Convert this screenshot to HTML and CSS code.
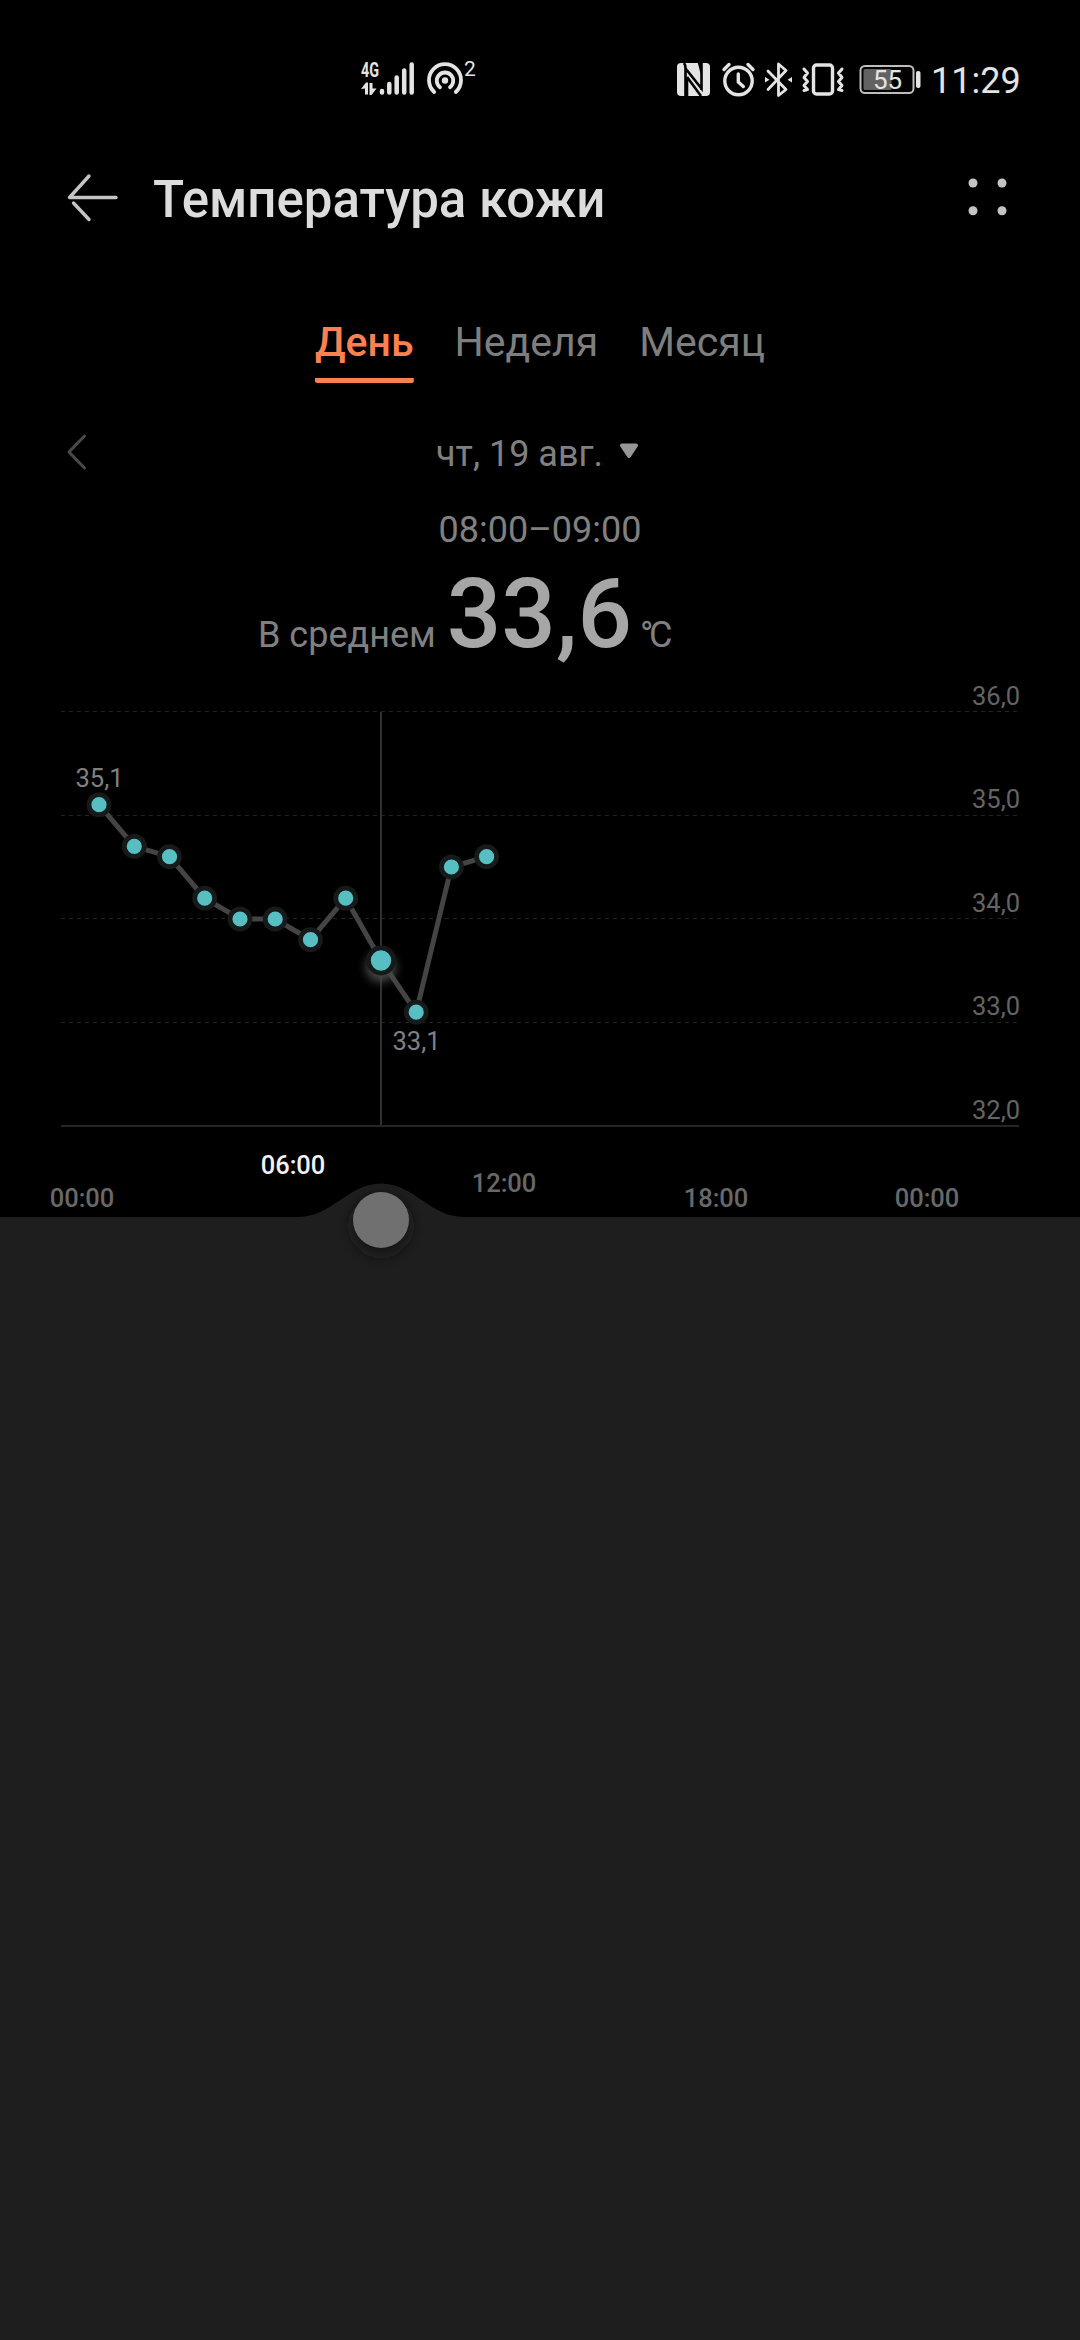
FILE: index.html
```html
<!DOCTYPE html>
<html lang="ru">
<head>
<meta charset="utf-8">
<title>Температура кожи</title>
<link rel="stylesheet" href="styles.css">
</head>
<body>
<div class="screen">
  <div class="status">
    <svg class="status-left" width="120" height="48" viewBox="360 56 120 48">
      <text class="net" x="361" y="77" textLength="18" lengthAdjust="spacingAndGlyphs">4G</text>
      <path class="fill" d="M361 89l5-6.500h2v12h-3v-6zM376.500 88.500l-5 6.500h-2V83h3v5.500z"/>
      <path class="bars" d="M382 91v1.500M389.300 84v8.500M396.700 77.500v15M404.200 70.500v22M411.700 64.500v28"/>
      <g class="arcs"><path d="M434.200 92a16 16 0 1 1 21.600 0M440 87.200a8.200 8.200 0 1 1 10 0"/></g>
      <circle class="fill" cx="445" cy="80.500" r="3.200"/>
      <text class="sup" x="464" y="76">2</text>
    </svg>
    <svg class="status-right" width="250" height="48" viewBox="674 56 250 48">
      <rect class="fill" x="677" y="63" width="33" height="33" rx="4"/>
      <path class="nfc" d="M685.500 96V68.500l16 20V74c0-3-1-6-2.500-11.500M701.500 62.500V90M685.500 68c0 0 0-3-1.500-5M687 77v19M687 77l14 19"/>
      <circle class="line" cx="738.500" cy="81" r="13.700"/>
      <path class="line" d="M738.300 74v8l5 4.500M724 69.500l5-5M753 69.500l-5-5"/>
      <path class="bt" d="M768 71l18 18.500-7.500 6V64l7.500 6.500L768 89.500"/>
      <path class="fill" d="M765 77l4.500 2.700-4.500 2.700zM792 77l-4.500 2.700 4.500 2.700z"/>
      <rect class="line" x="813.500" y="65" width="19" height="29" rx="3"/>
      <path class="zig" d="M804 69l3.500 4-3.500 4.500 3.500 4-3.500 4 3.500 4-3.500 1M842 69l-3.500 4 3.500 4.500-3.500 4 3.500 4-3.500 4 3.500 1"/>
      <rect class="batt" x="860.500" y="66" width="53" height="27" rx="4.500"/>
      <rect class="charge" x="863.500" y="69" width="28" height="21" rx="1.500"/>
      <rect class="fill" x="916" y="71" width="4.500" height="17" rx="2"/>
      <text class="pct" x="873" y="89">55</text>
    </svg>
    <span class="clock">11:29</span>
  </div>

  <header class="header">
    <svg class="back" width="54" height="54" viewBox="66 171 54 54"><path d="M89 176L69.500 197.500H116M73.500 203L89 219.500"/></svg>
    <h1 class="title">Температура кожи</h1>
    <svg class="more" width="44" height="44" viewBox="966 175 44 44"><circle cx="973" cy="183" r="4.500"/><circle cx="1002" cy="183" r="4.500"/><circle cx="973" cy="210.700" r="4.500"/><circle cx="1002" cy="210.700" r="4.500"/></svg>
  </header>

  <nav class="tabs">
    <span class="tab tab-active">День</span>
    <span class="tab">Неделя</span>
    <span class="tab">Месяц</span>
  </nav>

  <div class="date-row">
    <svg class="prev" width="24" height="40" viewBox="0 0 24 40"><path d="M19.500 4L4 20l15.500 16"/></svg>
    <div class="date">чт, 19 авг.
      <svg width="20" height="16" viewBox="0 0 20 16"><path d="M3 2.500h14L10 13z"/></svg>
    </div>
  </div>

  <div class="range">08:00–09:00</div>
  <div class="reading"><span>В среднем</span><strong>33,6</strong><span class="unit">°C</span></div>

  <svg class="chart" width="1080" height="590" viewBox="0 680 1080 590">
    <defs>
      <filter id="glow" x="-100%" y="-100%" width="300%" height="300%"><feGaussianBlur stdDeviation="5"/></filter>
      <filter id="shade" x="-50%" y="-50%" width="200%" height="200%"><feGaussianBlur stdDeviation="8"/></filter>
    </defs>
    <path class="grid" d="M61 711.500H1019M61 815.500H1019M61 918.500H1019M61 1022.500H1019"/>
    <path class="axis" d="M61 1126H1019"/>
    <path class="cursor" d="M381 712V1125"/>
    <g class="y-labels">
      <text x="1020" y="704.500">36,0</text>
      <text x="1020" y="808">35,0</text>
      <text x="1020" y="911.500">34,0</text>
      <text x="1020" y="1015">33,0</text>
      <text x="1020" y="1118.500">32,0</text>
    </g>
    <polyline class="series" points="99,804.700 134.300,846.300 169.500,856.700 204.700,898.200 240,919 275.200,919 310.500,939.700 345.700,898.200 381,960.500 416.200,1012.200 451.400,867 486.600,856.700"/>
    <circle class="halo" cx="381" cy="967" r="15" filter="url(#glow)"/>
    <g class="points">
      <circle cx="99" cy="804.700" r="10"/><circle cx="134.300" cy="846.300" r="10"/><circle cx="169.500" cy="856.700" r="10"/><circle cx="204.700" cy="898.200" r="10"/><circle cx="240" cy="919" r="10"/><circle cx="275.200" cy="919" r="10"/><circle cx="310.500" cy="939.700" r="10"/><circle cx="345.700" cy="898.200" r="10"/><circle cx="381" cy="960.500" r="12.600"/><circle cx="416.200" cy="1012.200" r="10"/><circle cx="451.400" cy="867" r="10"/><circle cx="486.600" cy="856.700" r="10"/>
    </g>
    <g class="peaks"><text x="99.500" y="787">35,1</text><text x="416.500" y="1050">33,1</text></g>
    <path class="panel" d="M0 1217H298C332 1217 348 1183.500 381 1183.500S430 1217 464 1217H1080V1270H0z"/>
    <circle class="knob-shadow" cx="381" cy="1226" r="28" filter="url(#shade)"/>
    <circle class="knob" cx="381" cy="1220" r="28"/>
    <g class="x-labels">
      <text x="82" y="1206.500">00:00</text>
      <text class="selected" x="293" y="1173.500">06:00</text>
      <text x="504" y="1191.500">12:00</text>
      <text x="716" y="1206.500">18:00</text>
      <text x="927" y="1206.500">00:00</text>
    </g>
  </svg>
</div>
</body>
</html>
```
FILE: styles.css
```css
* { box-sizing: border-box; }
body {
  margin: 0;
  background: #1e1e1e;
  font-family: Roboto, "Noto Sans", sans-serif;
}
svg { display: block; flex: none; }
.screen {
  width: 1080px;
  height: 2340px;
  display: flex;
  flex-direction: column;
  background: linear-gradient(#000 1217px, #1e1e1e 1217px);
}

.status {
  height: 144px;
  padding: 56px 60px 0 360px;
  display: flex;
  align-items: flex-start;
}
.status-right { margin-left: 194px; }
.status .fill { fill: #e4e4e4; }
.bars, .arcs, .line, .bt, .zig { fill: none; stroke: #e4e4e4; stroke-linecap: round; stroke-linejoin: round; }
.bars { stroke-width: 4.5px; }
.arcs { stroke-width: 3.8px; }
.line { stroke-width: 3.4px; }
.bt { stroke-width: 2.8px; }
.zig { stroke-width: 3px; }
.nfc { fill: none; stroke: #000; stroke-width: 2.6px; }
.batt { fill: none; stroke: #bdbdbd; stroke-width: 2px; }
.charge { fill: #626262; }
.status text { fill: #e4e4e4; }
.net { font-size: 21px; font-weight: 700; }
.sup { font-size: 21px; }
.pct { font-size: 26px; }
.clock {
  margin-left: 7px;
  font-size: 36px;
  line-height: 50px;
  color: #e4e4e4;
}

.header {
  height: 112px;
  padding: 0 70px 0 66px;
  display: flex;
  align-items: center;
}
.back { margin-bottom: 4px; }
.back path { fill: none; stroke: #c4c4c4; stroke-width: 3.4px; stroke-linecap: round; stroke-linejoin: round; }
.title {
  flex: 1;
  margin: 0 0 0 33px;
  font-size: 51px;
  font-weight: 500;
  line-height: 60px;
  color: #dcdcdc;
}
.more { margin-bottom: 6px; fill: #c4c4c4; }

.tabs {
  height: 142px;
  padding-top: 62px;
  display: flex;
  justify-content: center;
  gap: 41px;
  font-size: 41px;
  line-height: 48px;
  color: #7e7e7e;
}
.tab { height: 65px; }
.tab-active {
  border-bottom: 5px solid transparent;
  background: linear-gradient(#fb8250, #fb8250) bottom / 100% 5px no-repeat border-box;
  border-radius: 2.5px;
  font-weight: 500;
  color: #fb8250;
}

.date-row {
  height: 110px;
  display: flex;
  align-items: center;
  padding-left: 65px;
  color: #808080;
}
.prev { margin-bottom: 2px; }
.prev path { fill: none; stroke: #494949; stroke-width: 3px; stroke-linecap: round; stroke-linejoin: round; }
.date {
  margin: 2px 0 0 347px;
  display: flex;
  align-items: center;
  gap: 16px;
  font-size: 36px;
  line-height: 44px;
}
.date svg { margin-top: -7px; }
.date path { fill: #979797; stroke: #979797; stroke-width: 4px; stroke-linejoin: round; }

.range {
  height: 44px;
  text-align: center;
  font-size: 36px;
  line-height: 44px;
  color: #808080;
}
.reading {
  height: 128px;
  padding-left: 258px;
  display: flex;
  align-items: baseline;
  gap: 11px;
  font-size: 36px;
  color: #808080;
}
.reading strong {
  font-size: 96px;
  font-weight: 500;
  line-height: 124px;
  color: #a6a6a6;
}
.unit {
  margin-left: -3px;
  letter-spacing: -4.4px;
}

.grid { stroke: #242424; stroke-width: 1px; stroke-dasharray: 4 4; }
.axis { stroke: #262626; stroke-width: 2px; }
.cursor { stroke: #303030; stroke-width: 2px; }
.series { fill: none; stroke: #444; stroke-width: 5px; }
.halo { fill: #484848; }
.points circle { fill: #57bfc2; stroke: #161a1b; stroke-width: 4.800px; }
.y-labels { font-size: 25.5px; text-anchor: end; fill: #646464; }
.peaks { font-size: 25.5px; text-anchor: middle; fill: #808080; }
.x-labels { font-size: 25.5px; font-weight: 500; text-anchor: middle; fill: #686868; }
.x-labels .selected { fill: #f2f2f2; }
.panel { fill: #1e1e1e; }
.knob-shadow { fill: #171717; }
.knob { fill: #707070; }
```
